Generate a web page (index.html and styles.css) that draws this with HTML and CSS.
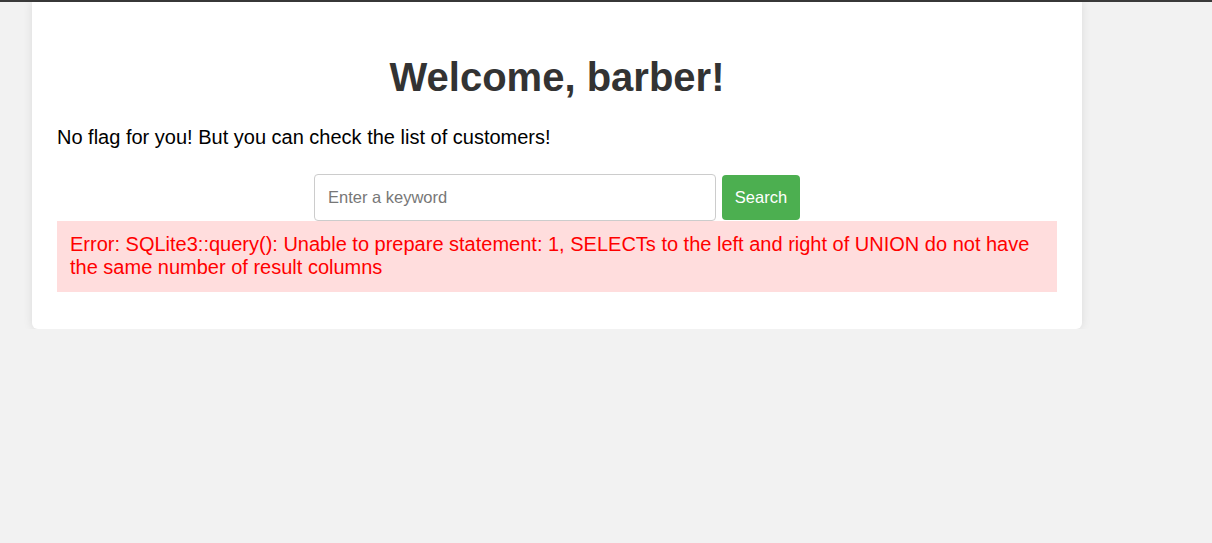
FILE: index.html
```html
<!DOCTYPE html>
<html lang="en">
<head>
<meta charset="utf-8">
<title>Welcome</title>
<link rel="stylesheet" href="styles.css">
</head>
<body>
<div class="topline"></div>
<div class="container">
  <h1 class="title">Welcome, barber!</h1>
  <p class="lead">No flag for you! But you can check the list of customers!</p>
  <form class="search">
    <input class="search-input" type="text" placeholder="Enter a keyword">
    <button class="search-btn" type="button">Search</button>
  </form>
  <div class="error">Error: SQLite3::query(): Unable to prepare statement: 1, SELECTs to the left and right of UNION do not have the same number of result columns</div>
</div>
</body>
</html>
```

FILE: styles.css
```css
html, body {
  margin: 0;
  padding: 0;
  background: #f2f2f2;
  font-family: "Liberation Sans", Arial, sans-serif;
}
.topline {
  height: 2px;
  background: #3a3a3a;
}
.container {
  width: 1000px;
  margin-left: 32px;
  padding: 25px 25px 37px;
  background: #fff;
  border-radius: 0 0 6px 6px;
  box-shadow: 0 0 10px rgba(0,0,0,0.1);
}
.title {
  margin: 26px 0 0;
  text-align: center;
  font-size: 40px;
  line-height: 48px;
  color: #333;
  font-weight: bold;
}
.lead {
  margin: 24px 0 0;
  font-size: 20px;
  line-height: 24px;
  color: #000;
}
.search {
  margin-top: 25px;
  display: flex;
  justify-content: center;
  align-items: center;
  gap: 6px;
}
.search-input {
  box-sizing: border-box;
  width: 402px;
  height: 47px;
  padding: 0 13px;
  border: 1px solid #ccc;
  border-radius: 4px;
  font-family: "Liberation Sans", Arial, sans-serif;
  font-size: 16.5px;
  color: #333;
}
.search-input::placeholder { color: #777; }
.search-btn {
  box-sizing: border-box;
  width: 78px;
  height: 45px;
  border: none;
  border-radius: 4px;
  background: #4caf50;
  color: #fff;
  font-family: "Liberation Sans", Arial, sans-serif;
  font-size: 16.5px;
}
.error {
  background: #ffdddd;
  color: #ff0000;
  padding: 12px 13px 13px;
  font-size: 20px;
  line-height: 23px;
}
```
